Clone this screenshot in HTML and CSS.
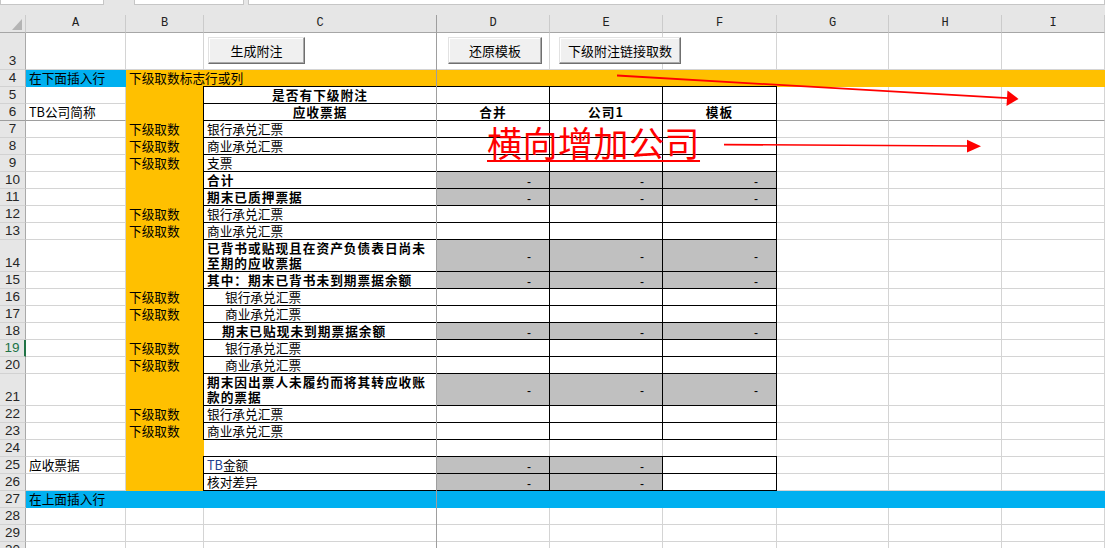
FILE: index.html
```html
<!DOCTYPE html>
<html lang="zh-CN">
<head>
  <meta charset="UTF-8" />
  <title>应收票据附注</title>
  <link rel="stylesheet" href="styles.css">
</head>
<body>
  <div class="app">
    <div class="toolbar">
      <div class="box box1"></div>
      <div class="box box2"></div>
      <div class="box box3"></div>
    </div>

    <div class="sheet">
      <div class="row hd">
        <div class="c ch corner">
          <svg width="10" height="11" viewBox="0 0 10 11"><polygon points="0,11 10,0 10,11" fill="#b4b4b4"/></svg>
        </div>
        <div class="c ch">A</div>
        <div class="c ch">B</div>
        <div class="c ch">C</div>
        <div class="c ch">D</div>
        <div class="c ch">E</div>
        <div class="c ch">F</div>
        <div class="c ch">G</div>
        <div class="c ch">H</div>
        <div class="c ch">I</div>
      </div>

      <div class="row tall">
        <div class="c rh">3</div>
        <div class="c"></div><div class="c"></div><div class="c"></div><div class="c"></div>
        <div class="c"></div><div class="c"></div><div class="c"></div><div class="c"></div><div class="c"></div>
      </div>

      <div class="row">
        <div class="c rh">4</div>
        <div class="c blue">在下面插入行</div>
        <div class="c org span-b">下级取数标志行或列</div>
      </div>

      <div class="row">
        <div class="c rh">5</div>
        <div class="c"></div>
        <div class="c org"></div>
        <div class="c bx b ctr">是否有下级附注</div>
        <div class="c bx"></div><div class="c bx"></div><div class="c bx"></div>
        <div class="c"></div><div class="c"></div><div class="c"></div>
      </div>

      <div class="row frz">
        <div class="c rh">6</div>
        <div class="c">TB公司简称</div>
        <div class="c org"></div>
        <div class="c bx b ctr">应收票据</div>
        <div class="c bx b ctr">合并</div>
        <div class="c bx b ctr">公司1</div>
        <div class="c bx b ctr">模板</div>
        <div class="c"></div><div class="c"></div><div class="c"></div>
      </div>

      <div class="row">
        <div class="c rh">7</div>
        <div class="c"></div>
        <div class="c org">下级取数</div>
        <div class="c bx">银行承兑汇票</div>
        <div class="c bx"></div><div class="c bx"></div><div class="c bx"></div>
        <div class="c"></div><div class="c"></div><div class="c"></div>
      </div>

      <div class="row">
        <div class="c rh">8</div>
        <div class="c"></div>
        <div class="c org">下级取数</div>
        <div class="c bx">商业承兑汇票</div>
        <div class="c bx"></div><div class="c bx"></div><div class="c bx"></div>
        <div class="c"></div><div class="c"></div><div class="c"></div>
      </div>

      <div class="row">
        <div class="c rh">9</div>
        <div class="c"></div>
        <div class="c org">下级取数</div>
        <div class="c bx">支票</div>
        <div class="c bx"></div><div class="c bx"></div><div class="c bx"></div>
        <div class="c"></div><div class="c"></div><div class="c"></div>
      </div>

      <div class="row">
        <div class="c rh">10</div>
        <div class="c"></div>
        <div class="c org"></div>
        <div class="c bx b">合计</div>
        <div class="c bx g num">-</div><div class="c bx g num">-</div><div class="c bx g num">-</div>
        <div class="c"></div><div class="c"></div><div class="c"></div>
      </div>

      <div class="row">
        <div class="c rh">11</div>
        <div class="c"></div>
        <div class="c org"></div>
        <div class="c bx b">期末已质押票据</div>
        <div class="c bx g num">-</div><div class="c bx g num">-</div><div class="c bx g num">-</div>
        <div class="c"></div><div class="c"></div><div class="c"></div>
      </div>

      <div class="row">
        <div class="c rh">12</div>
        <div class="c"></div>
        <div class="c org">下级取数</div>
        <div class="c bx">银行承兑汇票</div>
        <div class="c bx"></div><div class="c bx"></div><div class="c bx"></div>
        <div class="c"></div><div class="c"></div><div class="c"></div>
      </div>

      <div class="row">
        <div class="c rh">13</div>
        <div class="c"></div>
        <div class="c org">下级取数</div>
        <div class="c bx">商业承兑汇票</div>
        <div class="c bx"></div><div class="c bx"></div><div class="c bx"></div>
        <div class="c"></div><div class="c"></div><div class="c"></div>
      </div>

      <div class="row dbl">
        <div class="c rh">14</div>
        <div class="c"></div>
        <div class="c org"></div>
        <div class="c bx b wrap">已背书或贴现且在资产负债表日尚未<br>至期的应收票据</div>
        <div class="c bx g num">-</div><div class="c bx g num">-</div><div class="c bx g num">-</div>
        <div class="c"></div><div class="c"></div><div class="c"></div>
      </div>

      <div class="row">
        <div class="c rh">15</div>
        <div class="c"></div>
        <div class="c org"></div>
        <div class="c bx b">其中：期末已背书未到期票据余额</div>
        <div class="c bx g num">-</div><div class="c bx g num">-</div><div class="c bx g num">-</div>
        <div class="c"></div><div class="c"></div><div class="c"></div>
      </div>

      <div class="row">
        <div class="c rh">16</div>
        <div class="c"></div>
        <div class="c org">下级取数</div>
        <div class="c bx ind">银行承兑汇票</div>
        <div class="c bx"></div><div class="c bx"></div><div class="c bx"></div>
        <div class="c"></div><div class="c"></div><div class="c"></div>
      </div>

      <div class="row">
        <div class="c rh">17</div>
        <div class="c"></div>
        <div class="c org">下级取数</div>
        <div class="c bx ind">商业承兑汇票</div>
        <div class="c bx"></div><div class="c bx"></div><div class="c bx"></div>
        <div class="c"></div><div class="c"></div><div class="c"></div>
      </div>

      <div class="row">
        <div class="c rh">18</div>
        <div class="c"></div>
        <div class="c org"></div>
        <div class="c bx b ind-b">期末已贴现未到期票据余额</div>
        <div class="c bx g num">-</div><div class="c bx g num">-</div><div class="c bx g num">-</div>
        <div class="c"></div><div class="c"></div><div class="c"></div>
      </div>

      <div class="row">
        <div class="c rh on">19</div>
        <div class="c"></div>
        <div class="c org">下级取数</div>
        <div class="c bx ind">银行承兑汇票</div>
        <div class="c bx"></div><div class="c bx"></div><div class="c bx"></div>
        <div class="c"></div><div class="c"></div><div class="c"></div>
      </div>

      <div class="row">
        <div class="c rh">20</div>
        <div class="c"></div>
        <div class="c org">下级取数</div>
        <div class="c bx ind">商业承兑汇票</div>
        <div class="c bx"></div><div class="c bx"></div><div class="c bx"></div>
        <div class="c"></div><div class="c"></div><div class="c"></div>
      </div>

      <div class="row dbl">
        <div class="c rh">21</div>
        <div class="c"></div>
        <div class="c org"></div>
        <div class="c bx b wrap">期末因出票人未履约而将其转应收账<br>款的票据</div>
        <div class="c bx g num">-</div><div class="c bx g num">-</div><div class="c bx g num">-</div>
        <div class="c"></div><div class="c"></div><div class="c"></div>
      </div>

      <div class="row">
        <div class="c rh">22</div>
        <div class="c"></div>
        <div class="c org">下级取数</div>
        <div class="c bx">银行承兑汇票</div>
        <div class="c bx"></div><div class="c bx"></div><div class="c bx"></div>
        <div class="c"></div><div class="c"></div><div class="c"></div>
      </div>

      <div class="row">
        <div class="c rh">23</div>
        <div class="c"></div>
        <div class="c org">下级取数</div>
        <div class="c bx">商业承兑汇票</div>
        <div class="c bx"></div><div class="c bx"></div><div class="c bx"></div>
        <div class="c"></div><div class="c"></div><div class="c"></div>
      </div>

      <div class="row">
        <div class="c rh">24</div>
        <div class="c"></div>
        <div class="c org"></div>
        <div class="c"></div><div class="c"></div><div class="c"></div><div class="c"></div>
        <div class="c"></div><div class="c"></div><div class="c"></div>
      </div>

      <div class="row">
        <div class="c rh">25</div>
        <div class="c">应收票据</div>
        <div class="c org"></div>
        <div class="c bx"><span class="tb">TB</span>金额</div>
        <div class="c bx g num">-</div><div class="c bx g num">-</div><div class="c bx"></div>
        <div class="c"></div><div class="c"></div><div class="c"></div>
      </div>

      <div class="row">
        <div class="c rh">26</div>
        <div class="c"></div>
        <div class="c org"></div>
        <div class="c bx">核对差异</div>
        <div class="c bx g num">-</div><div class="c bx g num">-</div><div class="c bx"></div>
        <div class="c"></div><div class="c"></div><div class="c"></div>
      </div>

      <div class="row">
        <div class="c rh">27</div>
        <div class="c blue span-a">在上面插入行</div>
      </div>

      <div class="row">
        <div class="c rh">28</div>
        <div class="c"></div><div class="c"></div><div class="c"></div><div class="c"></div>
        <div class="c"></div><div class="c"></div><div class="c"></div><div class="c"></div><div class="c"></div>
      </div>

      <div class="row">
        <div class="c rh">29</div>
        <div class="c"></div><div class="c"></div><div class="c"></div><div class="c"></div>
        <div class="c"></div><div class="c"></div><div class="c"></div><div class="c"></div><div class="c"></div>
      </div>

      <div class="row">
        <div class="c rh">30</div>
        <div class="c"></div><div class="c"></div><div class="c"></div><div class="c"></div>
        <div class="c"></div><div class="c"></div><div class="c"></div><div class="c"></div><div class="c"></div>
      </div>
    </div>

    <!-- frozen pane divider between C and D -->
    <div class="freeze-v"></div>

    <!-- macro buttons -->
    <button class="btn btn-gen">生成附注</button>
    <button class="btn btn-reset">还原模板</button>
    <button class="btn btn-link">下级附注链接取数</button>

    <!-- notes drawn on the sheet -->
    <div class="note">横向增加公司</div>
    <svg class="marks" width="1105" height="548">
      <line x1="617" y1="75.5" x2="1008" y2="98.2" stroke="#ff0000" stroke-width="1.8"/>
      <polygon points="1007.5,90.5 1018.5,99 1006.5,106" fill="#ff0000"/>
      <line x1="724" y1="144.6" x2="968" y2="146" stroke="#ff0000" stroke-width="1.6"/>
      <polygon points="967,139.8 981,146.2 967,152.4" fill="#ff0000"/>
    </svg>
  </div>
</body>
</html>
```

FILE: styles.css
```css
* {
  box-sizing: border-box;
}
body {
  margin: 0;
  font-family: "Noto Sans CJK SC", "Noto Sans", sans-serif;
  font-size: 12.7px;
  color: #000;
  background: #fff;
  overflow: hidden;
}
.app {
  position: relative;
  width: 1105px;
  height: 548px;
  overflow: hidden;
}

/* strip left of the formula bar */
.toolbar {
  display: flex;
  height: 15px;
  background: #e6e6e6;
}
.toolbar .box {
  height: 5px;
  background: #fff;
  border: 1px solid #c6c6c6;
  border-top: none;
}
.box1 {
  width: 104px;
}
.box2 {
  width: 110px;
  margin-left: 30px;
}
.box3 {
  flex: 1;
  margin-left: 4px;
}

/* grid */
.row {
  display: grid;
  grid-template-columns: 26px 100px 78px 233px 113px 113px 114px 112px 113px minmax(0, 1fr);
  grid-template-rows: minmax(0, 1fr);
  height: 17px;
}
.row.hd {
  height: 18px;
}
.row.tall {
  height: 37px;
}
.row.dbl {
  height: 32px;
}
.c {
  min-width: 0;
  min-height: 0;
  display: flex;
  align-items: flex-end;
  padding: 0 3px 1px;
  line-height: 15px;
  white-space: nowrap;
  border-right: 1px solid #d4d4d4;
  border-bottom: 1px solid #d4d4d4;
}

/* headers */
.ch {
  background: #e6e6e6;
  border-right-color: #cbcbcb;
  border-bottom-color: #a6a6a6;
  justify-content: center;
  align-items: center;
  padding: 0;
  font-family: "Liberation Mono", monospace;
  font-size: 12px;
  color: #222;
}
.ch.corner {
  justify-content: flex-end;
  align-items: flex-end;
  padding: 0 3px 2px 0;
}
.rh {
  background: #e6e6e6;
  border-right-color: #a9a9a9;
  border-bottom-color: #d2d2d2;
  justify-content: center;
  padding: 0;
  font-family: "Liberation Sans", sans-serif;
  font-size: 13.5px;
  line-height: 16px;
  color: #262626;
}
.rh.on {
  color: #217346;
  border-right: 2px solid #217346;
}
.frz .c {
  border-bottom-color: #9e9e9e;
}

/* fills */
.blue {
  background: #00b0f0;
  border-color: transparent;
}
.org {
  background: #ffc000;
  border-color: transparent;
}
.frz .org {
  border-bottom-color: transparent;
}
.span-a {
  grid-column: 2 / -1;
}
.span-b {
  grid-column: 3 / -1;
}
.g {
  background: #c0c0c0;
}

/* table borders */
.bx {
  position: relative;
}
.bx::after {
  content: "";
  position: absolute;
  top: -1px;
  left: -1px;
  right: -1px;
  bottom: -1px;
  border: 1px solid #000;
  pointer-events: none;
}

/* text */
.b {
  font-weight: 700;
  letter-spacing: 1px;
}
.ctr {
  justify-content: center;
}
.ind {
  padding-left: 21px;
}
.ind-b {
  padding-left: 18px;
}
.wrap {
  white-space: normal;
  align-items: center;
}
.num {
  justify-content: flex-end;
  align-items: center;
  padding: 4px 18px 0 0;
  font-family: "Liberation Sans", sans-serif;
  font-size: 12px;
}
.tb {
  color: #24418f;
}

.freeze-v {
  position: absolute;
  left: 436px;
  top: 15px;
  bottom: 0;
  width: 1px;
  background: #9e9e9e;
  z-index: 3;
}

/* form buttons */
.btn {
  position: absolute;
  top: 37px;
  height: 27px;
  margin: 0;
  padding: 0;
  background: #f0f0f0;
  border: 1px solid;
  border-color: #e2e2e2 #6f6f6f #6f6f6f #e2e2e2;
  box-shadow: inset -1px -1px 0 #a9a9a9, inset 1px 1px 0 #fff;
  font-family: "Noto Sans CJK SC", sans-serif;
  font-size: 13px;
  color: #000;
  z-index: 4;
}
.btn-gen {
  left: 208px;
  width: 97px;
}
.btn-reset {
  left: 448px;
  width: 94px;
}
.btn-link {
  left: 559px;
  width: 122px;
}

.note {
  position: absolute;
  left: 487px;
  top: 124px;
  font-size: 35px;
  line-height: 35px;
  letter-spacing: 0.5px;
  color: #ff0000;
  white-space: nowrap;
  text-decoration: underline;
  text-decoration-thickness: 2px;
  text-underline-offset: 3px;
  z-index: 5;
}
.marks {
  position: absolute;
  left: 0;
  top: 0;
  pointer-events: none;
  z-index: 5;
}
```
